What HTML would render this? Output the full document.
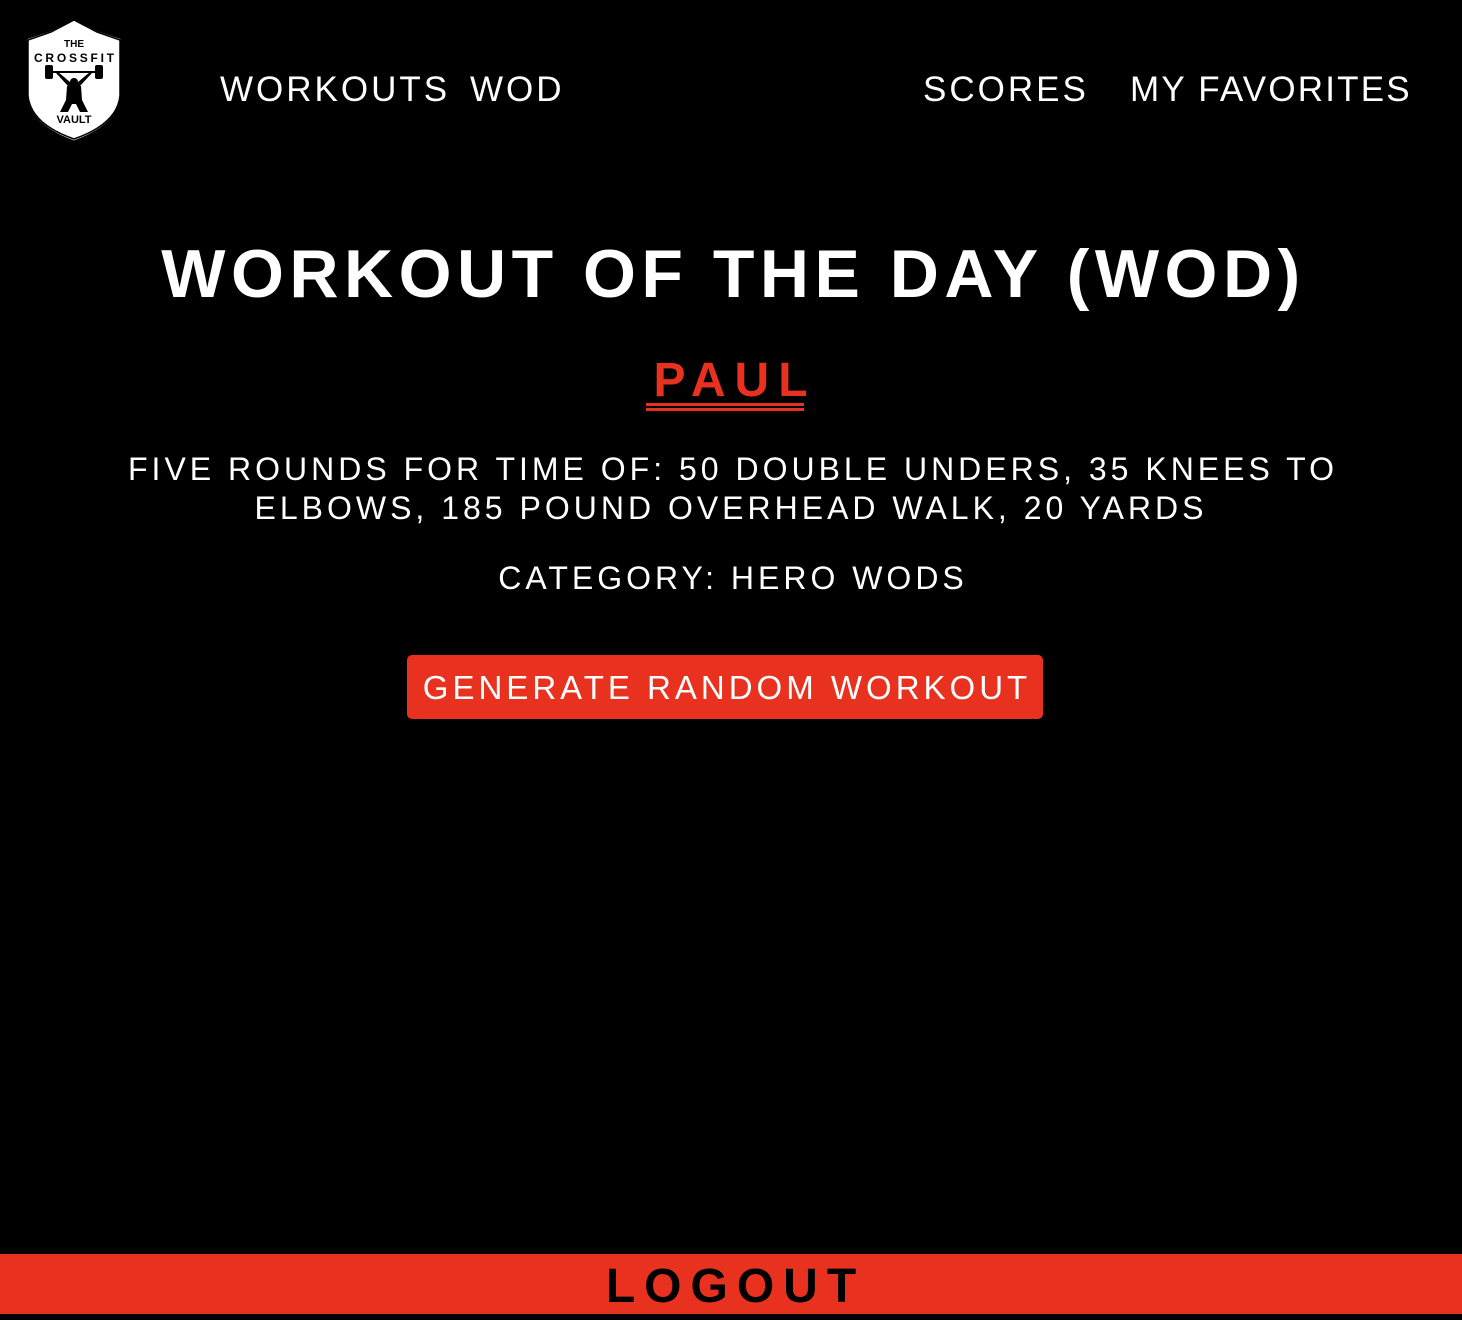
<!DOCTYPE html>
<html><head><style>
body{margin:0;width:1462px;height:1314px;background:#000;color:#fff;font-family:"Liberation Sans",sans-serif;position:relative;overflow:hidden}
.nav{position:absolute;top:70px;font-size:35px;letter-spacing:3px;line-height:40px;font-weight:normal}
.c{position:absolute;left:0;width:1462px;text-align:center}
</style></head><body>
<svg style="position:absolute;left:24px;top:16px" width="100" height="128" viewBox="0 0 100 128">
<path d="M50 2 L74 14 L98 22 L98 80 Q95 110 50 126 Q5 110 2 80 L2 22 L26 14 Z" fill="#fff" stroke="#000" stroke-width="3"/>
<path d="M50 4 L73 16 L96 24 L96 80 Q93 108 50 123 Q7 108 4 80 L4 24 L27 16 Z" fill="none" stroke="#000" stroke-width="1.5"/>
<text x="50" y="31" font-size="10" font-weight="bold" text-anchor="middle" fill="#000" font-family="Liberation Sans">THE</text>
<text x="50" y="46" font-size="12" font-weight="bold" text-anchor="middle" fill="#000" font-family="Liberation Sans" textLength="80">CROSSFIT</text>
<rect x="22" y="55" width="56" height="2" fill="#000"/>
<rect x="21" y="49" width="8" height="14" rx="2" fill="#000"/><rect x="71" y="49" width="8" height="14" rx="2" fill="#000"/>
<circle cx="50" cy="66" r="4" fill="#000"/>
<path d="M32 57 L44 70 L56 70 L68 57 L66 56 L54 66 L46 66 L34 56 Z M43 70 L57 70 L58 84 L64 96 L56 96 L52 88 L48 88 L44 96 L36 96 L42 84 Z" fill="#000"/>
<text x="50" y="107" font-size="11" font-weight="bold" text-anchor="middle" fill="#000" font-family="Liberation Sans">VAULT</text>
</svg>
<div class="nav" style="left:220px">WORKOUTS</div>
<div class="nav" style="left:470px">WOD</div>
<div class="nav" style="left:923px">SCORES</div>
<div class="nav" style="left:1130px;letter-spacing:2.2px">MY FAVORITES</div>
<div class="c" style="top:236px;font-size:68px;font-weight:bold;line-height:76px;letter-spacing:5.5px;text-indent:5px">WORKOUT OF THE DAY (WOD)</div>
<div class="c" style="top:356px;font-size:48px;font-weight:bold;color:#e8321f;line-height:50px;letter-spacing:9px;text-indent:8px">PAUL</div>
<div style="position:absolute;left:646px;top:403px;width:158px;height:3px;background:#e8321f"></div>
<div style="position:absolute;left:646px;top:408px;width:158px;height:3px;background:#e8321f"></div>
<div class="c" style="top:450px;font-size:32px;line-height:39px;letter-spacing:4px;text-indent:4px">FIVE ROUNDS FOR TIME OF: 50 DOUBLE UNDERS, 35 KNEES TO<br>ELBOWS, 185 POUND OVERHEAD WALK, 20 YARDS</div>
<div class="c" style="top:559px;font-size:32px;line-height:39px;letter-spacing:4px;text-indent:4px">CATEGORY: HERO WODS</div>
<div style="position:absolute;left:407px;top:655px;width:636px;height:64px;background:#e8321f;border-radius:5px;font-size:33px;line-height:66px;text-align:center;letter-spacing:4px;text-indent:4px">GENERATE RANDOM WORKOUT</div>
<div style="position:absolute;left:0;top:1254px;width:1462px;height:60px;background:#e8321f;color:#000;font-size:48px;font-weight:bold;text-align:center;line-height:66px;letter-spacing:9px;text-indent:9px">LOGOUT</div>
</body></html>
